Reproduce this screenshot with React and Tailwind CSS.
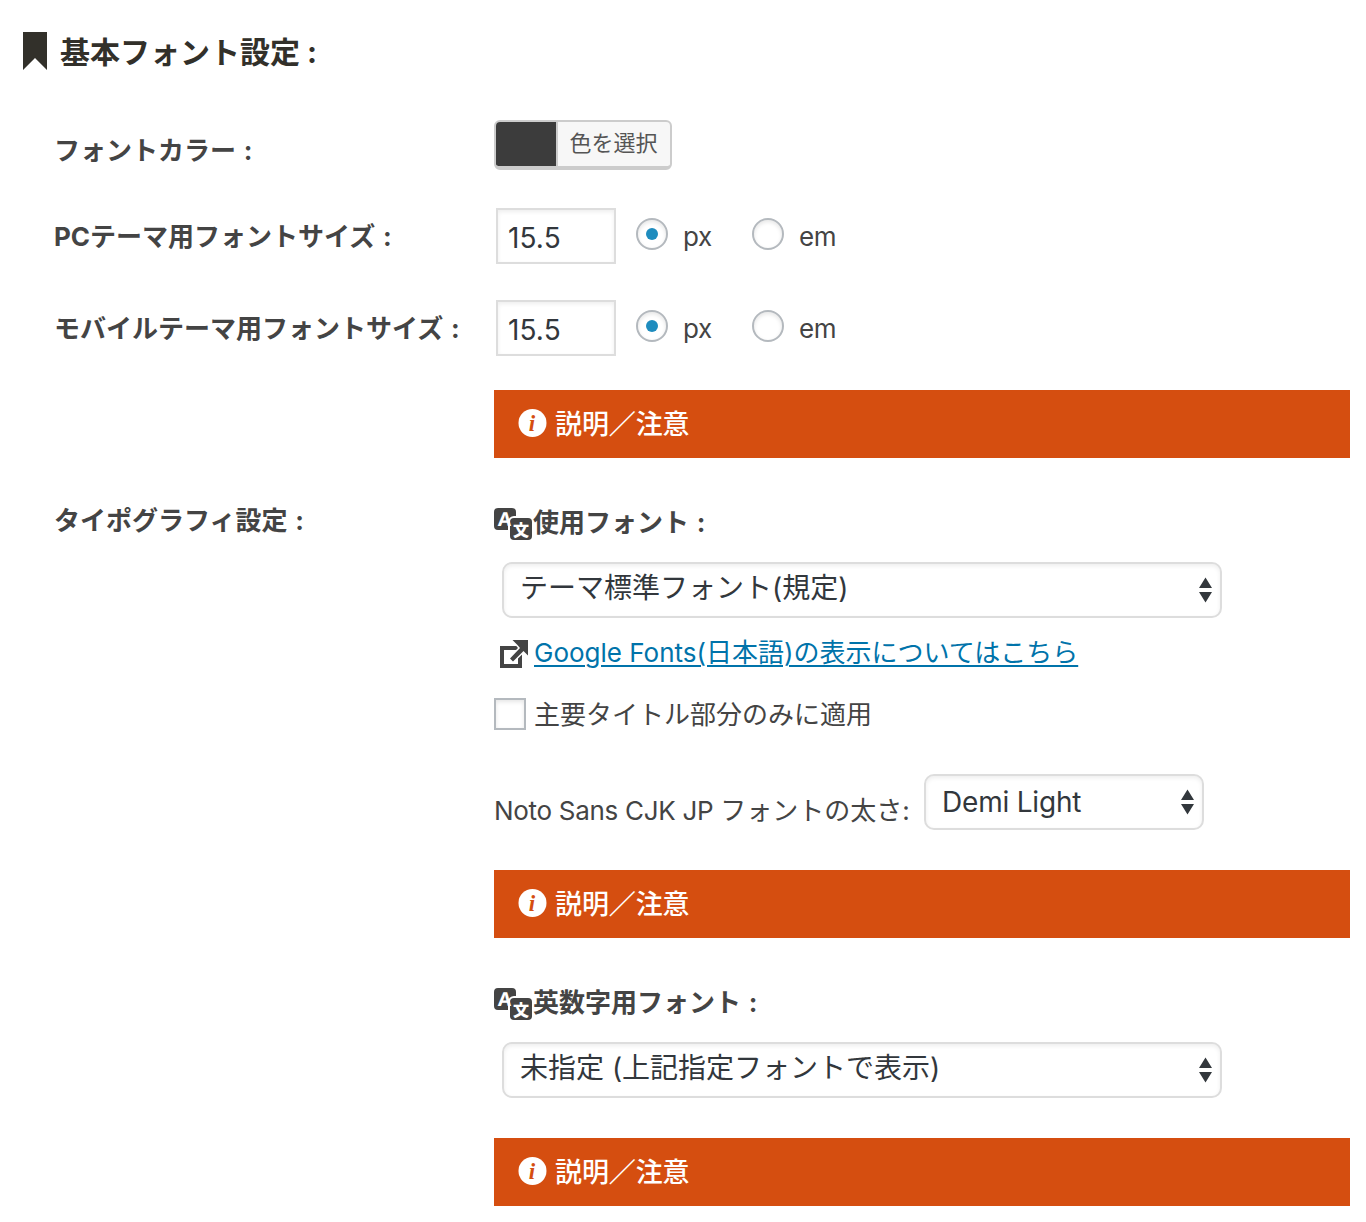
import { useState } from 'react'

function BookmarkIcon() {
  return (
    <svg viewBox="0 0 24 38" className="h-[38px] w-6 shrink-0 fill-[#32302a]">
      <path d="M0 0h24v38L12 26 0 38z" />
    </svg>
  )
}

function TranslationIcon() {
  return (
    <svg viewBox="0 0 38 32" className="h-8 w-[38px] shrink-0 overflow-visible">
      <path d="M4 0h14a4 4 0 0 1 4 4v4h-2a6 6 0 0 0-6 6v8H4a4 4 0 0 1-4-4V4a4 4 0 0 1 4-4z" fill="#444" />
      <rect x="16" y="10" width="22" height="22" rx="4" fill="#444" />
      <text x="4.500" y="18" fill="#fff" fontSize="19" fontWeight="700" fontFamily="Inter, sans-serif" transform="skewX(-4)">
        A
      </text>
      <text x="19" y="27.500" fill="#fff" fontSize="16" fontWeight="900" fontFamily="'Noto Sans CJK JP', sans-serif">
        文
      </text>
    </svg>
  )
}

function ExternalIcon() {
  return (
    <svg viewBox="0 0 28 28" className="mt-[2px] h-7 w-7 shrink-0">
      <path d="M2 8h18v18H2z" fill="none" stroke="#444" strokeWidth="4" />
      <path
        d="M12.500 0H28v15.500l-4.500-4.500L13 21.500 10 18.500 20 8l-3-3.500z"
        fill="#444"
        stroke="#fff"
        strokeWidth="3"
        paintOrder="stroke"
      />
    </svg>
  )
}

function InfoIcon() {
  return (
    <svg viewBox="0 0 28 28" className="-mt-[2px] size-7 shrink-0 overflow-visible">
      <circle cx="14.500" cy="14" r="14" fill="#fff" />
      <text
        x="14"
        y="21.500"
        textAnchor="middle"
        fill="#d54e10"
        fontSize="23"
        fontStyle="italic"
        fontWeight="700"
        fontFamily="'Liberation Serif', serif"
      >
        i
      </text>
    </svg>
  )
}

function Label({ children, className = '' }) {
  return (
    <div
      className={`-ml-px w-[440px] shrink-0 pt-[2px] text-[26px] leading-[40px] font-bold whitespace-nowrap [word-spacing:1.5px] ${className}`}
    >
      {children}
    </div>
  )
}

function Notice({ className = '' }) {
  return (
    <div className={`flex h-[68px] items-center bg-[#d54e10] pl-[24px] text-[27px] font-medium text-white ${className}`}>
      <InfoIcon />
      <span className="ml-[9px] pt-[2px] leading-[40px] tracking-[-0.1px]">
        説明<span className="font-bold">／</span>注意
      </span>
    </div>
  )
}

function Radio({ label, checked, onSelect }) {
  return (
    <button type="button" onClick={onSelect} className="flex items-center">
      <span className="mb-1 flex size-8 items-center justify-center rounded-full border-2 border-[#b4b9be] shadow-[inset_0_2px_4px_rgba(0,0,0,0.1)]">
        {checked && <span className="size-3 rounded-full bg-[#1e8cbe]" />}
      </span>
      <span className="ml-[15px] pt-[2px] text-[26px] leading-[38px] tracking-[-0.4px]">{label}</span>
    </button>
  )
}

function FontSizeRow({ label }) {
  const [unit, setUnit] = useState('px')

  return (
    <div className="flex h-[92px] items-center">
      <Label>{label}</Label>
      <div className="ml-[2px] flex h-14 w-[120px] items-center border-2 border-[#ddd] pl-[10px] text-[28px] text-[#32373c] shadow-[inset_0_2px_4px_rgba(0,0,0,0.07)]">
        <span className="mt-[3px] tracking-[0.1px]">15.5</span>
      </div>
      <div className="ml-5 w-[116px]">
        <Radio label="px" checked={unit === 'px'} onSelect={() => setUnit('px')} />
      </div>
      <Radio label="em" checked={unit === 'em'} onSelect={() => setUnit('em')} />
    </div>
  )
}

function SelectBox({ value, className = '', textClassName = 'mb-1' }) {
  return (
    <div
      className={`flex h-14 items-center justify-between rounded-[10px] border-2 border-[#ddd] pr-[8px] pl-4 text-[28px] text-[#32373c] shadow-[inset_0_2px_4px_rgba(0,0,0,0.07)] ${className}`}
    >
      <span className={`leading-[40px] ${textClassName}`}>{value}</span>
      <svg viewBox="0 0 13 26" className="h-[26px] w-[13px] fill-[#32373c]">
        <path d="M6.500 0.500l6.500 10.500H0zM6.500 25.500L13 15H0z" />
      </svg>
    </div>
  )
}

function FontHeading({ children }) {
  return (
    <div className="flex h-10 items-center">
      <TranslationIcon />
      <span className="mb-[2px] ml-px text-[26px] leading-[40px] font-bold [word-spacing:1.5px]">{children}</span>
    </div>
  )
}

function App() {
  return (
    <main className="h-[1222px] w-[1366px] overflow-hidden bg-white pr-4 font-[Inter,'Noto_Sans_CJK_JP',sans-serif] text-[#444]">
      <h1 className="flex h-[102px] items-center gap-[13px] pl-[23px] text-[30px] font-bold text-[#32302a]">
        <BookmarkIcon />
        <span className="pt-[2px]">基本フォント設定 :</span>
      </h1>

      <div className="pl-[55px]">
        <div className="flex h-[88px] pt-[18px]">
          <Label className="mt-[9px]">フォントカラー :</Label>
          <button
            type="button"
            className="flex h-[50px] w-[178px] overflow-hidden rounded-[6px] border-2 border-b-4 border-[#ccc] bg-[#f7f7f7] text-[22px] text-[#555]"
          >
            <span className="h-full w-[60px] bg-[#3c3c3c]" />
            <span className="h-full flex-1 border-l-2 border-[#ccc] pr-[1px] leading-[42px]">色を選択</span>
          </button>
        </div>

        <FontSizeRow label="PCテーマ用フォントサイズ :" />
        <FontSizeRow label="モバイルテーマ用フォントサイズ :" />

        <Notice className="mt-4 ml-[439px]" />

        <div className="flex pt-[42px]">
          <Label className="-mt-px">タイポグラフィ設定 :</Label>
          <div className="min-w-0 flex-1 pt-1">
            <FontHeading>使用フォント :</FontHeading>
            <SelectBox value="テーマ標準フォント(規定)" className="mt-[18px] ml-2 w-[720px]" />

            <div className="mt-[15px] flex h-10 items-center pl-[6px]">
              <ExternalIcon />
              <a
                href="#"
                className="ml-[6px] text-[26px] leading-[40px] text-[#0073aa] underline decoration-2 underline-offset-[3px]"
              >
                Google Fonts(日本語)の表示についてはこちら
              </a>
            </div>

            <label className="mt-[21px] flex h-10 items-center">
              <span className="size-8 border-2 border-[#b4b9be] shadow-[inset_0_2px_4px_rgba(0,0,0,0.1)]" />
              <span className="ml-2 pt-[2px] text-[26px] leading-[40px]">主要タイトル部分のみに適用</span>
            </label>

            <div className="mt-10 flex h-14">
              <span className="mt-[17px] w-[430px] text-[26px] leading-[40px] whitespace-nowrap">
                <span className="tracking-[-0.3px]">Noto Sans CJK JP </span>
                フォントの太さ:
              </span>
              <SelectBox value="Demi Light" className="w-[280px]" textClassName="tracking-[-0.2px]" />
            </div>

            <Notice className="mt-10" />

            <div className="mt-[46px]">
              <FontHeading>英数字用フォント :</FontHeading>
            </div>
            <SelectBox value="未指定 (上記指定フォントで表示)" className="mt-[18px] ml-2 w-[720px]" />

            <Notice className="mt-10" />
          </div>
        </div>
      </div>
    </main>
  )
}

export default App
